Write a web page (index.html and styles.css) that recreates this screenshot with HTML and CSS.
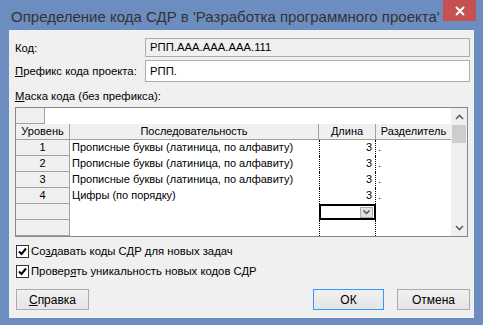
FILE: index.html
```html
<!DOCTYPE html>
<html lang="ru">
<head>
    <meta charset="UTF-8">
    <title>Определение кода СДР</title>
    <link rel="stylesheet" href="styles.css">
</head>
<body>
    <div class="window">
        <div class="titlebar">
            <div class="title">Определение кода СДР в 'Разработка программного проекта'</div>
            <div class="close">
                <svg width="10" height="10" viewBox="0 0 10 10"><path d="M1 1 L9 9 M9 1 L1 9" stroke="#fff" stroke-width="2"/></svg>
            </div>
        </div>

        <div class="panel">
            <div class="field">
                <label>Код:</label>
                <div class="input disabled">РПП.ААА.ААА.ААА.111</div>
            </div>
            <div class="field">
                <label><u>П</u>рефикс кода проекта:</label>
                <div class="input tall">РПП.</div>
            </div>

            <div class="mask-label"><u>М</u>аска кода (без префикса):</div>

            <div class="grid">
                <div class="sheet">
                    <div class="entry-row">
                        <div class="corner"></div>
                        <div class="entry"></div>
                    </div>
                    <div class="row head">
                        <div class="cell c-level">Уровень</div>
                        <div class="cell c-seq">Последовательность</div>
                        <div class="cell c-len">Длина</div>
                        <div class="cell c-sep">Разделитель</div>
                    </div>
                    <div class="body">
                        <div class="row">
                            <div class="cell c-level">1</div>
                            <div class="cell c-seq">Прописные буквы (латиница, по алфавиту)</div>
                            <div class="cell c-len">3</div>
                            <div class="cell c-sep">.</div>
                        </div>
                        <div class="row">
                            <div class="cell c-level">2</div>
                            <div class="cell c-seq">Прописные буквы (латиница, по алфавиту)</div>
                            <div class="cell c-len">3</div>
                            <div class="cell c-sep">.</div>
                        </div>
                        <div class="row">
                            <div class="cell c-level">3</div>
                            <div class="cell c-seq">Прописные буквы (латиница, по алфавиту)</div>
                            <div class="cell c-len">3</div>
                            <div class="cell c-sep">.</div>
                        </div>
                        <div class="row">
                            <div class="cell c-level">4</div>
                            <div class="cell c-seq">Цифры (по порядку)</div>
                            <div class="cell c-len">3</div>
                            <div class="cell c-sep">.</div>
                        </div>
                        <div class="row">
                            <div class="cell c-level"></div>
                            <div class="cell c-seq"></div>
                            <div class="cell c-len">
                                <div class="editor">
                                    <span class="drop">
                                        <svg width="7" height="5" viewBox="0 0 7 5"><path d="M0.5 0.5 L3.5 3.5 L6.5 0.5" fill="none" stroke="#555" stroke-width="1.5"/></svg>
                                    </span>
                                </div>
                            </div>
                            <div class="cell c-sep"></div>
                        </div>
                        <div class="row">
                            <div class="cell c-level"></div>
                            <div class="cell c-seq"></div>
                            <div class="cell c-len"></div>
                            <div class="cell c-sep"></div>
                        </div>
                    </div>
                </div>
                <div class="scrollbar">
                    <div class="arrow">
                        <svg width="9" height="6" viewBox="0 0 9 6"><path d="M1 5 L4.5 1.5 L8 5" fill="none" stroke="#606060" stroke-width="1.6"/></svg>
                    </div>
                    <div class="track"><div class="thumb"></div></div>
                    <div class="arrow">
                        <svg width="9" height="6" viewBox="0 0 9 6"><path d="M1 1 L4.5 4.5 L8 1" fill="none" stroke="#606060" stroke-width="1.6"/></svg>
                    </div>
                </div>
            </div>

            <div class="check">
                <span class="box"><svg width="11" height="11" viewBox="0 0 11 11"><path d="M2 5.5 L4.5 8 L9 2.5" fill="none" stroke="#000" stroke-width="2"/></svg></span>
                Со<u>з</u>давать коды СДР для новых задач
            </div>
            <div class="check">
                <span class="box"><svg width="11" height="11" viewBox="0 0 11 11"><path d="M2 5.5 L4.5 8 L9 2.5" fill="none" stroke="#000" stroke-width="2"/></svg></span>
                Провер<u>я</u>ть уникальность новых кодов СДР
            </div>

            <div class="buttons">
                <button><u>С</u>правка</button>
                <span class="spacer"></span>
                <button class="default">ОК</button>
                <button>Отмена</button>
            </div>
        </div>
    </div>
</body>
</html>
```
FILE: styles.css
```css
:root {
    --frame: #6b8dc0;
    --face: #f0f0f0;
    --line: #a0a0a0;
}
* {
    box-sizing: border-box;
}
body {
    margin: 0;
    background: var(--frame);
    font-family: "Liberation Sans", Arial, sans-serif;
    font-size: 11.3px;
    color: #000;
}
.window {
    width: 483px;
    height: 325px;
    display: flex;
    flex-direction: column;
}
.titlebar {
    height: 30px;
    display: flex;
    align-items: flex-start;
}
.title {
    flex: 1;
    overflow: hidden;
    white-space: nowrap;
    padding: 8px 0 0 11px;
    font-size: 15px;
    color: #333;
}
.close {
    width: 33px;
    height: 21px;
    margin: 0 7px 0 2px;
    background: #c75050;
    display: flex;
    align-items: center;
    justify-content: center;
}
.panel {
    flex: 1;
    margin: 0 9px 7px 9px;
    background: var(--face);
    padding: 8px 4px 0 6px;
}
.field {
    display: flex;
    align-items: center;
    margin-bottom: 3px;
}
.field label {
    width: 130px;
    white-space: nowrap;
}
.input {
    flex: 1;
    height: 19px;
    border: 1px solid #acacac;
    background: #fff;
    padding: 2px 4px;
}
.input.disabled {
    background: var(--face);
}
.input.tall {
    height: 22px;
    padding-top: 4px;
}
.mask-label {
    margin-top: 8px;
    height: 17px;
}
.grid {
    display: flex;
    width: 453px;
    height: 130px;
    border: 1px solid #828790;
    background: #fff;
}
.sheet {
    flex: 1;
}
.entry-row {
    display: flex;
    height: 16px;
}
.corner {
    width: 29px;
    background: var(--face);
    border-right: 1px solid var(--line);
    border-bottom: 1px solid var(--line);
}
.entry {
    flex: 1;
}
.row {
    display: flex;
    height: 16px;
}
.cell {
    line-height: 15px;
    white-space: nowrap;
    font-size: 11px;
}
.c-level {
    width: 54px;
    text-align: center;
    background: var(--face);
    border-right: 1px solid var(--line);
    border-bottom: 1px solid var(--line);
}
.c-seq {
    width: 249px;
    padding-left: 2px;
}
.c-len {
    width: 57px;
    text-align: right;
    padding-right: 3px;
    border-left: 1px dotted #000;
    border-right: 1px dotted #000;
    position: relative;
}
.c-sep {
    flex: 1;
    padding-left: 2px;
}
.head .cell {
    background: var(--face);
    border-bottom: 1px solid var(--line);
    border-right: 1px solid var(--line);
    text-align: center;
    padding: 0;
}
.head .c-len {
    border-left: none;
}
.head .c-sep {
    border-right: none;
}
.editor {
    position: absolute;
    left: -1px;
    right: -1px;
    top: 0;
    height: 16px;
    border: 2px solid #000;
    background: #fff;
    display: flex;
    justify-content: flex-end;
    align-items: center;
    padding-right: 1px;
}
.drop {
    width: 13px;
    height: 11px;
    background: #e1e1e1;
    border: 1px solid #adadad;
    display: flex;
    align-items: center;
    justify-content: center;
}
.scrollbar {
    width: 16px;
    background: var(--face);
    display: flex;
    flex-direction: column;
}
.arrow {
    height: 17px;
    display: flex;
    align-items: center;
    justify-content: center;
}
.track {
    flex: 1;
}
.thumb {
    margin: 0 1px;
    height: 18px;
    background: #cdcdcd;
}
.check {
    display: flex;
    align-items: center;
    height: 20px;
    margin-top: 4px;
}
.check + .check {
    margin-top: 0;
}
.box {
    width: 13px;
    height: 13px;
    border: 1px solid #333;
    background: #fff;
    margin: 0 2px 0 1px;
    display: flex;
    align-items: center;
    justify-content: center;
}
.buttons {
    display: flex;
    margin-top: 8px;
    padding-left: 1px;
    gap: 13px;
}
.spacer {
    flex: 1;
}
button {
    font-family: inherit;
    font-size: 12px;
    width: 73px;
    height: 21px;
    padding: 0;
    border: 1px solid #acacac;
    background: linear-gradient(#f0f0f0, #e5e5e5);
    color: #000;
}
button.default {
    width: 71px;
    border-color: #3399ff;
}
```
